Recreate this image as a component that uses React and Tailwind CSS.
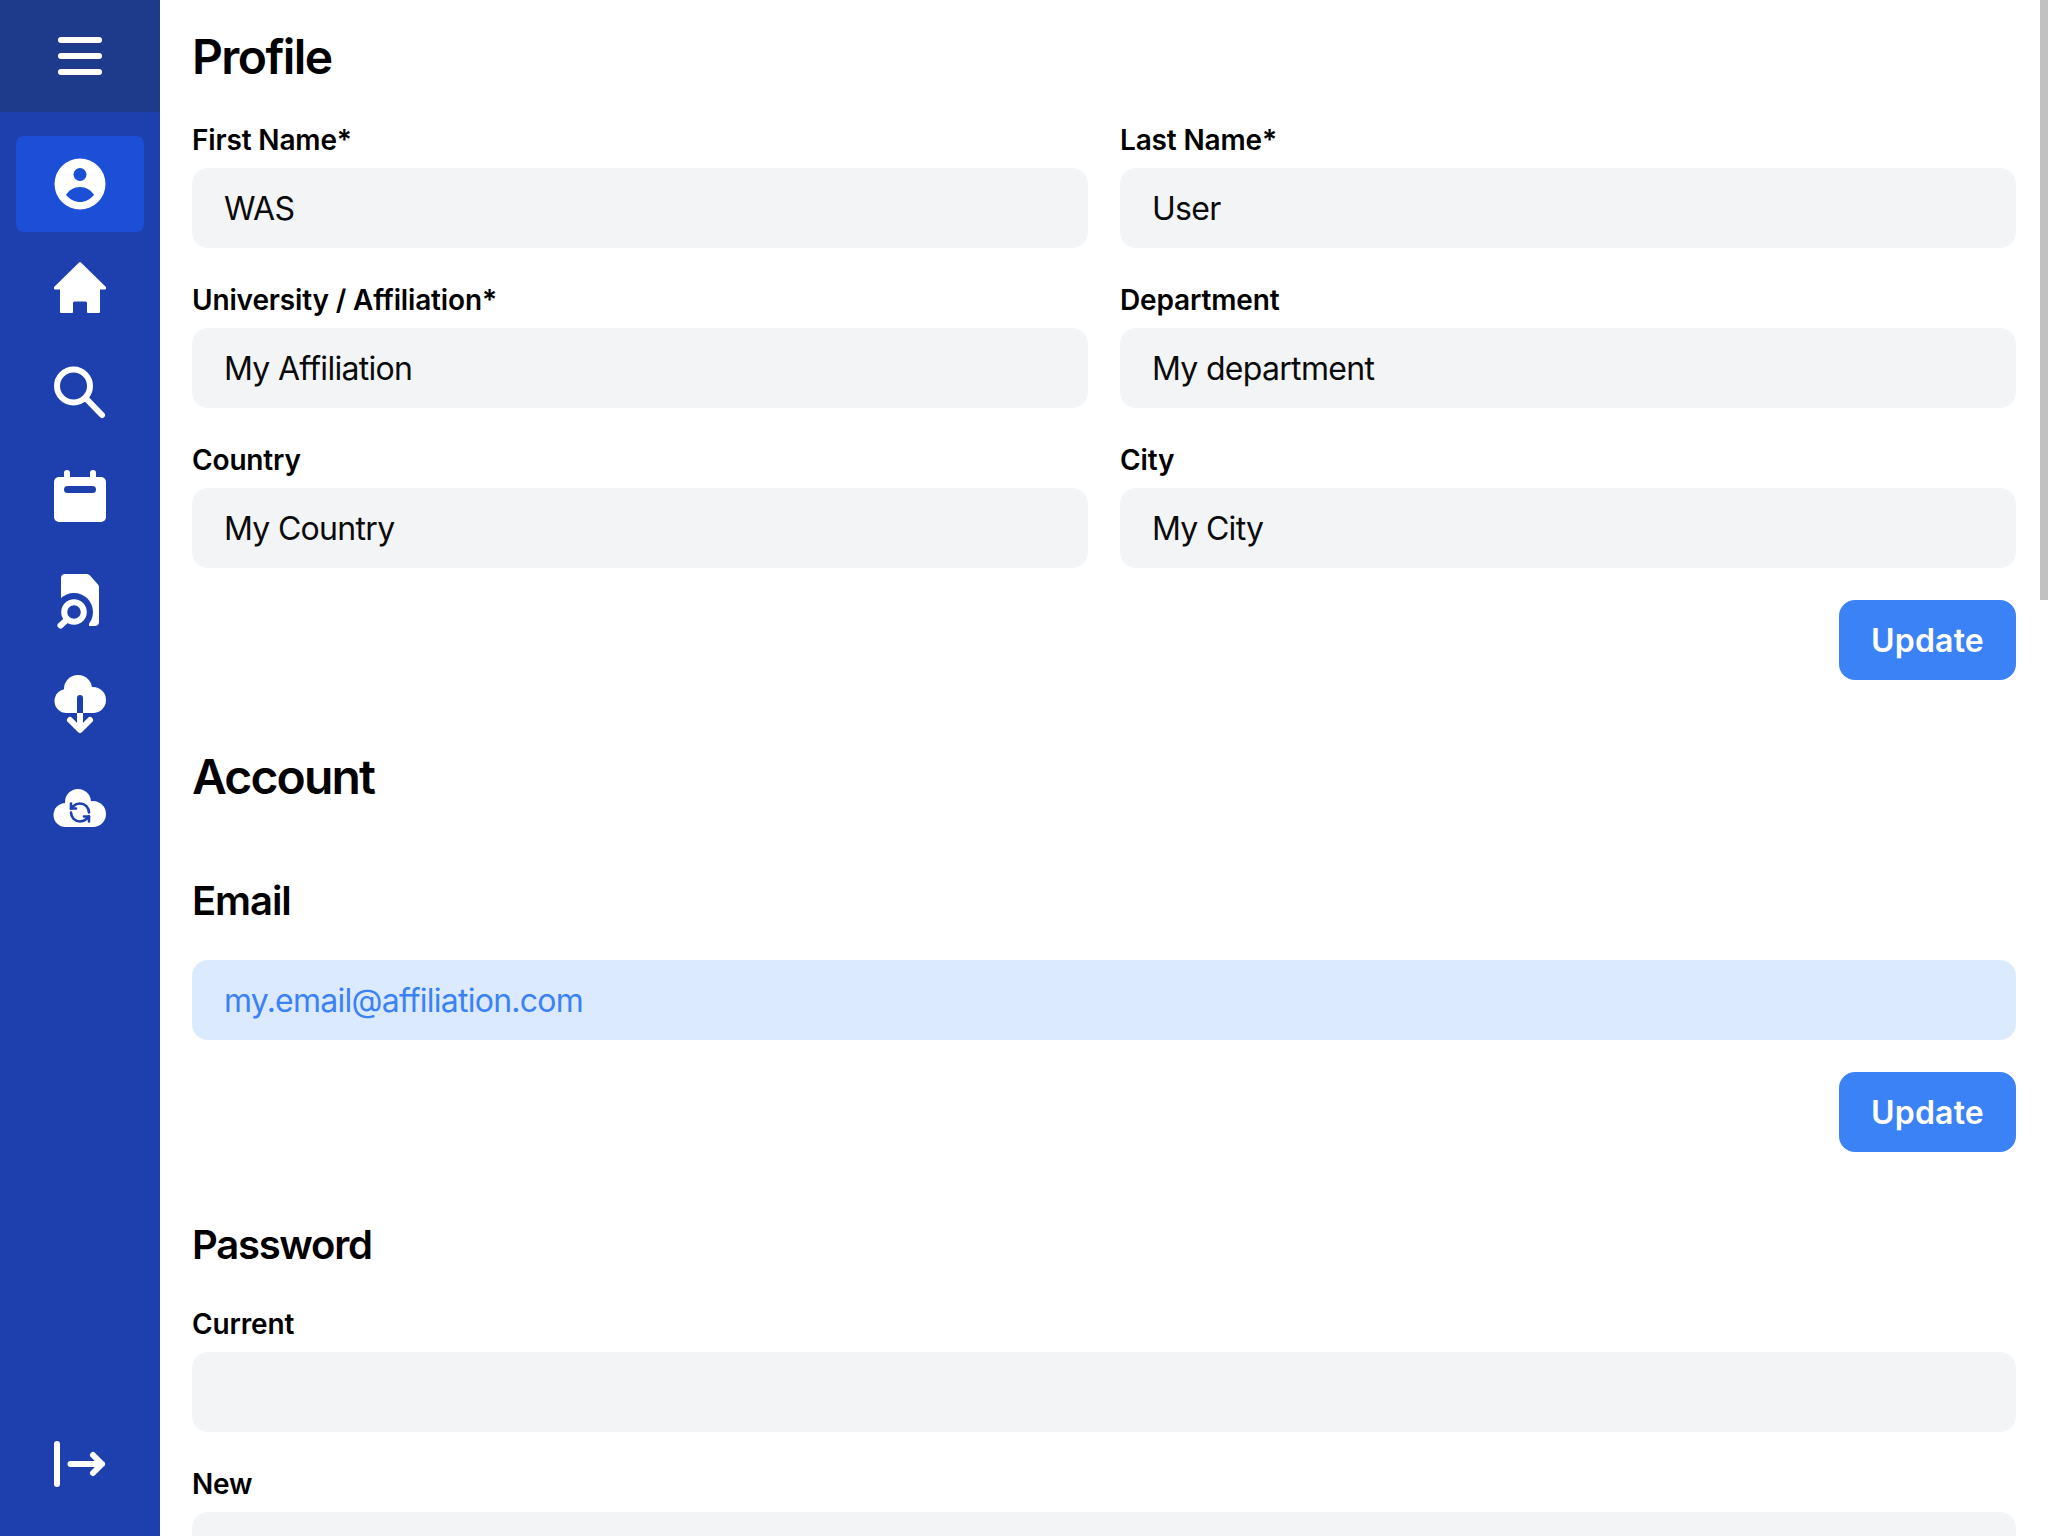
import React from "react";

const BLUE = "#1e40af";
const ACTIVE = "#1d4ed8";

const Icon = ({ children }) => (
  <svg viewBox="0 0 80 80" className="w-20 h-20" fill="none">
    {children}
  </svg>
);

const MenuIcon = () => (
  <Icon>
    <path d="M21 24H59M21 40H59M21 56H59" stroke="#fff" strokeWidth="6" strokeLinecap="round" />
  </Icon>
);

const ProfileIcon = () => (
  <Icon>
    <circle cx="40" cy="40" r="25.5" fill="#fff" />
    <circle cx="40" cy="30.5" r="6.5" fill={ACTIVE} />
    <path d="M26 51C29 46 34 43 40 43C46 43 51 46 54 51C50 55.5 45 58 40 58C35 58 30 55.5 26 51Z" fill={ACTIVE} />
  </Icon>
);

const HomeIcon = () => (
  <Icon>
    <path
      d="M40 15L65 39.5V40.5H59V64H48V55C48 53.5 47 52.5 45.5 52.5H34.5C33 52.5 32 53.5 32 55V64H21V40.5H15V39.5Z"
      fill="#fff"
      stroke="#fff"
      strokeWidth="2"
      strokeLinejoin="round"
    />
  </Icon>
);

const SearchIcon = () => (
  <Icon>
    <circle cx="33.5" cy="34" r="16.5" stroke="#fff" strokeWidth="6" />
    <path d="M46 46.5L62 63" stroke="#fff" strokeWidth="6" strokeLinecap="round" />
  </Icon>
);

const CalendarIcon = () => (
  <Icon>
    <path d="M27 17V24M53 17V24" stroke="#fff" strokeWidth="6" strokeLinecap="round" />
    <rect x="14" y="21" width="52" height="45" rx="5" fill="#fff" />
    <rect x="24" y="30" width="32" height="7" rx="3.5" fill={BLUE} />
  </Icon>
);

const DocSearchIcon = () => (
  <Icon>
    <path d="M25 14H47C48 14 49 14.5 50 15.5L57.5 24C58.5 25 59 26 59 27.5V62C59 64.5 57 66 55 66H25C23 66 21 64.5 21 62V18C21 15.5 23 14 25 14Z" fill="#fff" />
    <circle cx="34" cy="52" r="19" fill={BLUE} />
    <rect x="15" y="40" width="6" height="30" fill={BLUE} />
    <rect x="15" y="52" width="34" height="18" fill={BLUE} />
    <circle cx="34" cy="52" r="9.8" stroke="#fff" strokeWidth="6" />
    <path d="M26 60.5L20.5 65.5" stroke="#fff" strokeWidth="6" strokeLinecap="round" />
  </Icon>
);

const CloudDownIcon = () => (
  <Icon>
    <circle cx="38" cy="25" r="14" fill="#fff" />
    <circle cx="26.5" cy="37" r="12" fill="#fff" />
    <circle cx="53" cy="36" r="13" fill="#fff" />
    <rect x="26" y="30" width="27" height="19" fill="#fff" />
    <path d="M40 34V49" stroke={BLUE} strokeWidth="6" strokeLinecap="round" />
    <rect x="37" y="44" width="6" height="5" fill={BLUE} />
    <path d="M40 49V64" stroke="#fff" strokeWidth="6" />
    <path d="M30 56L40 66L50 56" stroke="#fff" strokeWidth="6" strokeLinecap="round" strokeLinejoin="round" />
  </Icon>
);

const CloudSyncIcon = () => (
  <Icon>
    <circle cx="38" cy="34" r="13" fill="#fff" />
    <circle cx="25.5" cy="47" r="12" fill="#fff" />
    <circle cx="53" cy="46" r="13" fill="#fff" />
    <rect x="25" y="40" width="28" height="19" fill="#fff" />
    <g transform="translate(28 32.5)" stroke={BLUE} strokeWidth="2.6" strokeLinecap="round" strokeLinejoin="round">
      <path d="M21 12a9 9 0 0 0-9-9 9.75 9.75 0 0 0-6.74 2.74L3 8" />
      <path d="M3 3v5h5" />
      <path d="M3 12a9 9 0 0 0 9 9 9.75 9.75 0 0 0 6.74-2.74L21 16" />
      <path d="M16 16h5v5" />
    </g>
  </Icon>
);

const LogoutIcon = () => (
  <Icon>
    <path d="M17 20V60M30.5 40H62M53 31L62 40L53 49" stroke="#fff" strokeWidth="6" strokeLinecap="round" strokeLinejoin="round" />
  </Icon>
);

const NavItem = ({ active, children }) => (
  <button className={`flex items-center justify-center w-32 h-24 rounded-lg ${active ? "bg-[#1d4ed8]" : ""}`}>
    {children}
  </button>
);

const Field = ({ label, value = "" }) => (
  <label className="block">
    <span className="block mb-[7px] text-[28px] leading-[41px] tracking-[-0.15px] font-semibold text-black">{label}</span>
    <input
      readOnly
      value={value}
      className="block w-full h-20 px-8 pt-px rounded-2xl bg-[#f3f4f6] text-[32px] tracking-[-0.7px] text-[#0b0b0b] outline-none"
    />
  </label>
);

const UpdateButton = () => (
  <div className="flex justify-end mt-8">
    <button className="h-20 px-8 pt-0.5 rounded-2xl bg-[#3b82f6] text-white text-[32px] tracking-[0.2px] font-semibold">Update</button>
  </div>
);

const App = () => {
  return (
    <div className="relative flex h-screen overflow-hidden bg-white font-['Inter',sans-serif]">
      {/* sidebar */}
      <aside className="flex flex-col w-40 shrink-0 bg-[#1e40af]">
        <div className="flex items-center justify-center h-28 bg-[#1e3a8a]">
          <MenuIcon />
        </div>
        <nav className="flex flex-col flex-1 items-center gap-2 pt-6 pb-6">
          <NavItem active><ProfileIcon /></NavItem>
          <NavItem><HomeIcon /></NavItem>
          <NavItem><SearchIcon /></NavItem>
          <NavItem><CalendarIcon /></NavItem>
          <NavItem><DocSearchIcon /></NavItem>
          <NavItem><CloudDownIcon /></NavItem>
          <NavItem><CloudSyncIcon /></NavItem>
          <div className="mt-auto">
            <NavItem><LogoutIcon /></NavItem>
          </div>
        </nav>
      </aside>

      {/* contenido */}
      <main className="flex-1 min-w-0 pt-6 pl-8 pr-8 text-black">
        <h1 className="mb-[30px] text-[48px] leading-[66px] tracking-[-1.6px] font-semibold">Profile</h1>
        <div className="grid grid-cols-2 gap-8">
          <Field label="First Name*" value="WAS" />
          <Field label="Last Name*" value="User" />
          <Field label="University / Affiliation*" value="My Affiliation" />
          <Field label="Department" value="My department" />
          <Field label="Country" value="My Country" />
          <Field label="City" value="My City" />
        </div>
        <UpdateButton />

        <h1 className="mt-16 mb-[-2px] text-[48px] leading-[66px] tracking-[-1.85px] font-semibold">Account</h1>

        <h2 className="mt-16 mb-[30px] text-[40px] leading-[58px] tracking-[-1.1px] font-semibold">Email</h2>
        <input
          readOnly
          value="my.email@affiliation.com"
          className="block w-full h-20 px-8 pt-px rounded-2xl bg-[#dbeafe] text-[32px] tracking-[-0.75px] text-[#3b82f6] outline-none"
        />
        <UpdateButton />

        <h2 className="mt-16 mb-[30px] text-[40px] leading-[58px] tracking-[-1.25px] font-semibold">Password</h2>
        <div className="flex flex-col gap-8">
          <Field label="Current" />
          <Field label="New" />
        </div>
      </main>

      {/* barra de scroll */}
      <div className="absolute top-0 right-0 w-2 h-[600px] bg-[#c1c1c1]" />
    </div>
  );
};

export default App;
